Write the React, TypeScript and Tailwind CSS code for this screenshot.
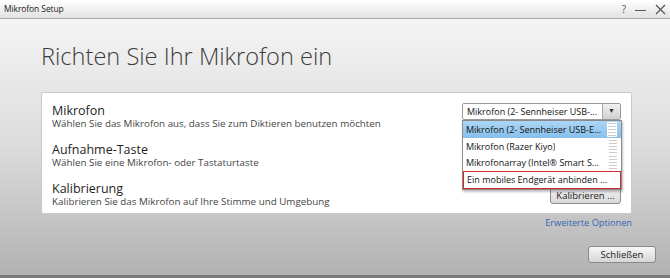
import React from 'react'

const FONT = { fontFamily: '"Open Sans", "Noto Sans", sans-serif' }

const options = [
  'Mikrofon (2- Sennheiser USB-E...',
  'Mikrofon (Razer Kiyo)',
  'Mikrofonarray (Intel® Smart S...',
]

function Stripes() {
  return (
    <div className="flex w-[8px] flex-col gap-[2px]">
      {[0, 1, 2, 3, 4].map((i) => (
        <div key={i} className="h-px bg-[#cdcdcd]" />
      ))}
    </div>
  )
}

function SettingRow({ title, desc }: { title: string; desc: string }) {
  return (
    <div className="flex flex-col">
      <div className="text-[12.5px] leading-[15px] text-[#1e1e1e]">{title}</div>
      <div className="text-[9.8px] leading-[12px] text-[#444]">{desc}</div>
    </div>
  )
}

export default function App() {
  return (
    <div className="flex h-[278px] w-[670px] flex-col overflow-hidden" style={FONT}>
      <div className="flex h-[19px] items-center justify-between border-b border-[#a9a9a9] bg-gradient-to-b from-[#ffffff] to-[#e2e2e2] pl-[4px] pr-[4px]">
        <span className="text-[8.5px] tracking-[-0.1px] text-[#222]">Mikrofon Setup</span>
        <div className="flex items-center gap-[9px] text-[#555]">
          <span className="text-[10px]">?</span>
          <span className="mt-[3px] h-[1.5px] w-[11px] bg-[#555]" />
          <svg width="11" height="11" viewBox="0 0 11 11">
            <path d="M1 1 L10 10 M10 1 L1 10" stroke="#555" strokeWidth="1.2" />
          </svg>
        </div>
      </div>

      <div className="flex flex-1 flex-col border-b-[3px] border-[#7a7a7a] bg-gradient-to-b from-[#f4f4f4] via-[#dcdcdc] to-[#b2b2b2] pl-[41px] pr-[38px]">
        <h1 className="mt-[21px] text-[23.6px] font-light leading-[32px] text-[#3c3c3c]">
          Richten Sie Ihr Mikrofon ein
        </h1>

        <div className="relative mt-[20px] flex h-[122px] flex-col gap-[12px] rounded-[2px] border border-[#c9c9c9] bg-white pl-[10px] pr-[10px] pt-[10px]">
          <div className="flex items-start justify-between">
            <SettingRow
              title="Mikrofon"
              desc="Wählen Sie das Mikrofon aus, dass Sie zum Diktieren benutzen möchten"
            />
            <div className="flex h-[17px] w-[159px] rounded-[2px] border border-[#9a9a9a] bg-white">
              <span className="flex-1 overflow-hidden whitespace-nowrap pl-[4px] text-[9px] leading-[15px] text-[#111]">
                Mikrofon (2- Sennheiser USB-...
              </span>
              <span className="flex w-[18px] items-center justify-center border-l border-[#a8a8a8] bg-gradient-to-b from-[#f2f2f2] to-[#cfcfcf] text-[7px] text-[#333]">
                ▼
              </span>
            </div>
          </div>
          <div className="flex items-start justify-between">
            <SettingRow title="Aufnahme-Taste" desc="Wählen Sie eine Mikrofon- oder Tastaturtaste" />
          </div>
          <div className="flex items-start justify-between">
            <SettingRow
              title="Kalibrierung"
              desc="Kalibrieren Sie das Mikrofon auf Ihre Stimme und Umgebung"
            />
            <button className="mt-[4px] h-[19px] w-[71px] rounded-[3px] border border-[#8e8e8e] bg-gradient-to-b from-[#f6f6f6] to-[#d8d8d8] pt-[3px] text-[9.5px] leading-[12px] text-[#222]">
              Kalibrieren ...
            </button>
          </div>

          <div className="absolute left-[420px] top-[27px] flex w-[160px] flex-col border border-[#8a8a8a] bg-white shadow-[1px_2px_2px_rgba(0,0,0,0.25)]">
            {options.map((opt, i) => (
              <div
                key={opt}
                className={
                  i === 0
                    ? 'flex h-[17px] items-center justify-between bg-gradient-to-b from-[#acd6f6] to-[#86bfea] pl-[3px] pr-[4px]'
                    : 'flex h-[16.5px] items-center justify-between pl-[3px] pr-[4px]'
                }
              >
                <span className="overflow-hidden whitespace-nowrap text-[9px] text-[#111]">{opt}</span>
                {i === 0 ? (
                  <div className="rounded-[1px] bg-white px-[1px] py-[1px]">
                    <Stripes />
                  </div>
                ) : (
                  <Stripes />
                )}
              </div>
            ))}
            <div className="flex h-[18px] items-center border-[1.5px] border-[#d9262b] pl-[3px]">
              <span className="overflow-hidden whitespace-nowrap text-[9px] text-[#111]">
                Ein mobiles Endgerät anbinden ...
              </span>
            </div>
          </div>
        </div>

        <div className="mt-[2px] flex justify-end">
          <a className="text-[9.2px] leading-[13px] text-[#3366b4]">Erweiterte Optionen</a>
        </div>

        <div className="mr-[-24px] mt-[17px] flex justify-end">
          <button className="h-[17px] w-[68px] rounded-[3px] border border-[#8a8a8a] bg-gradient-to-b from-[#f7f7f7] to-[#d6d6d6] text-[9.5px] leading-[15px] text-[#222]">
            Schließen
          </button>
        </div>
      </div>
    </div>
  )
}
